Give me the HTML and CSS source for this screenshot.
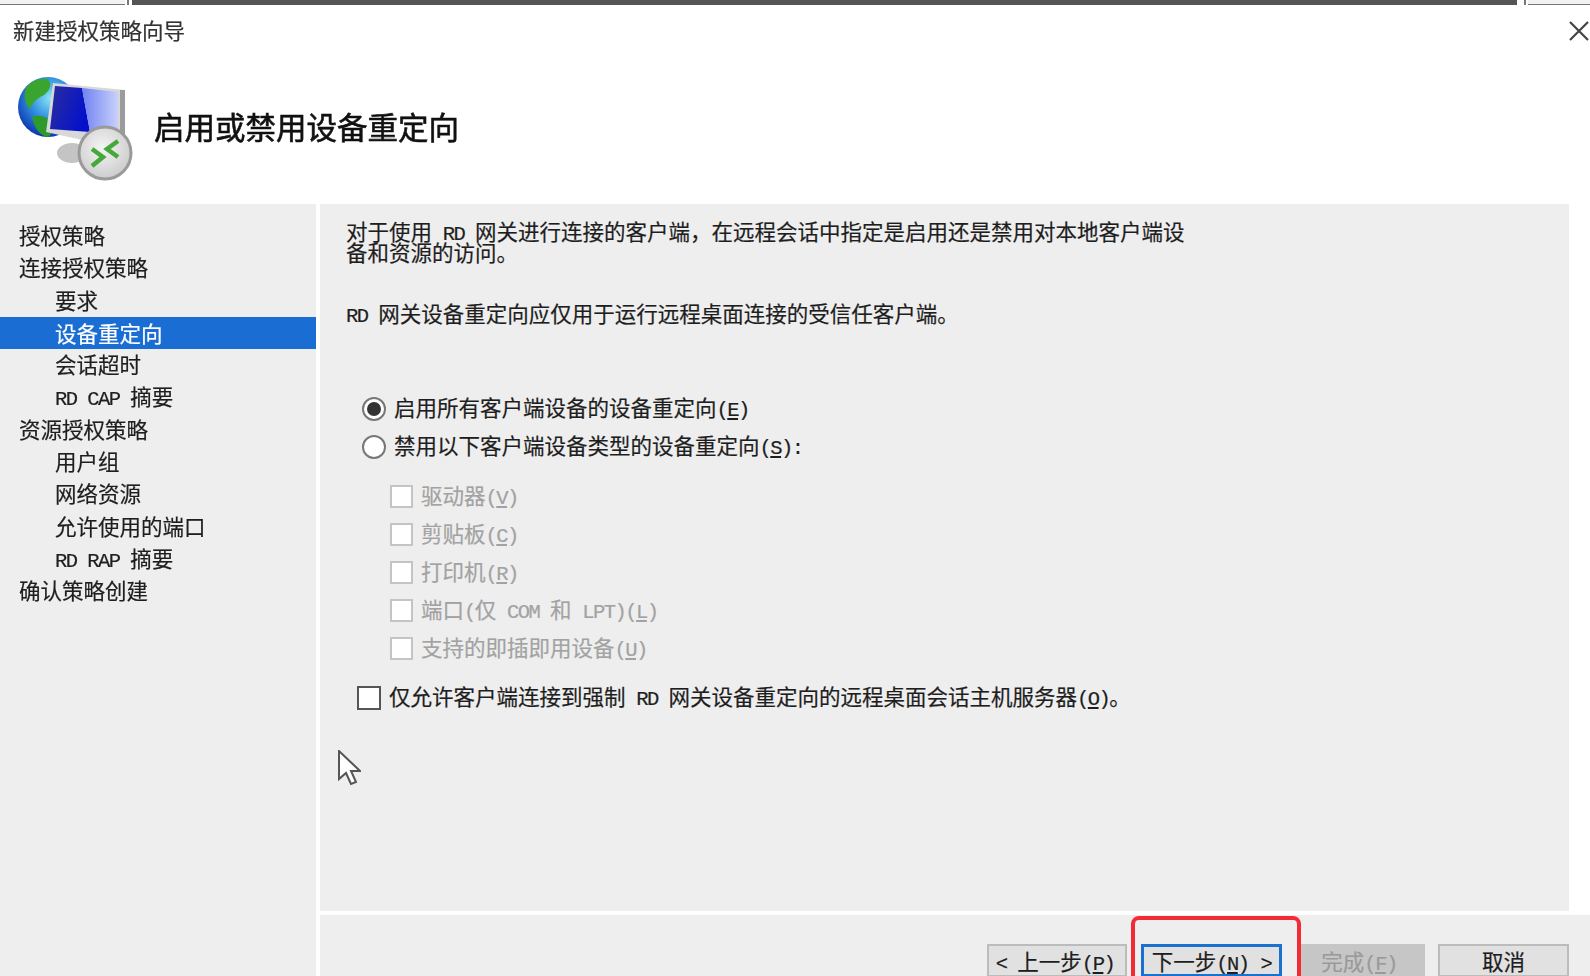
FILE: index.html
```html
<!DOCTYPE html>
<html lang="zh-CN">
<head>
    <meta charset="UTF-8">
    <title>新建授权策略向导</title>
    <link rel="stylesheet" href="styles.css">
</head>
<body>
    <div class="window">
        <div class="top-strip">
            <div class="strip-left"></div>
            <div class="strip-grip"></div>
            <div class="strip-dark"></div>
            <div class="strip-grip wide"></div>
            <div class="strip-right"></div>
        </div>

        <div class="title-bar">
            <span class="title-text">新建授权策略向导</span>
            <svg class="close-icon" viewBox="0 0 20 20" width="20" height="20">
                <path d="M1 1 L19 19 M19 1 L1 19" stroke="#444" stroke-width="2.2" fill="none"/>
            </svg>
        </div>

        <div class="banner">
            <svg class="banner-icon" viewBox="0 0 120 108" width="120" height="108">
                <defs>
                    <radialGradient id="sea" cx="0.55" cy="0.35" r="0.7">
                        <stop offset="0" stop-color="#8fe6f5"/>
                        <stop offset="0.5" stop-color="#2f8fe0"/>
                        <stop offset="1" stop-color="#0a2aa8"/>
                    </radialGradient>
                    <linearGradient id="screen-dark" x1="0" y1="0" x2="1" y2="0.4">
                        <stop offset="0" stop-color="#2a2f9c"/>
                        <stop offset="1" stop-color="#0510cc"/>
                    </linearGradient>
                    <linearGradient id="screen-light" x1="0" y1="0" x2="1" y2="0">
                        <stop offset="0" stop-color="#6f82f2"/>
                        <stop offset="1" stop-color="#c8d0fb"/>
                    </linearGradient>
                    <radialGradient id="badge" cx="0.45" cy="0.4" r="0.7">
                        <stop offset="0" stop-color="#f4f4f4"/>
                        <stop offset="1" stop-color="#c6c6c6"/>
                    </radialGradient>
                </defs>
                <circle cx="30" cy="34" r="30" fill="url(#sea)"/>
                <path d="M8 14 Q18 4 30 6 Q36 14 26 22 Q16 26 12 36 Q4 28 8 14 Z" fill="#3aa52e"/>
                <path d="M14 44 Q26 40 34 50 Q36 60 30 64 Q18 62 14 44 Z" fill="#2d9a2a"/>
                <ellipse cx="54" cy="80" rx="15" ry="10" fill="#c4c4c4"/>
                <path d="M35 10 L107 17 L107 62 L96 74 L28 59 Z" fill="#d8d8d8"/>
                <path d="M102 17 L107 17 L107 64 L102 68 Z" fill="#9b9b9b"/>
                <path d="M37 13 L64 15 L72 59 L32 56 Z" fill="url(#screen-dark)"/>
                <path d="M64 15 L100 19 L100 60 L72 59 Z" fill="url(#screen-light)"/>
                <circle cx="87" cy="80" r="26" fill="url(#badge)" stroke="#9a9a9a" stroke-width="3"/>
                <path d="M74 76 L85 84 L74 93 M100 68 L89 76 L100 84" fill="none" stroke="#45a83a" stroke-width="4.5"/>
            </svg>
            <span class="banner-title">启用或禁用设备重定向</span>
        </div>

        <div class="main">
            <div class="sidebar">
                <div class="nav-row">授权策略</div>
                <div class="nav-row">连接授权策略</div>
                <div class="nav-row sub">要求</div>
                <div class="nav-row sub selected">设备重定向</div>
                <div class="nav-row sub">会话超时</div>
                <div class="nav-row sub"><span class="lat">RD CAP </span>摘要</div>
                <div class="nav-row">资源授权策略</div>
                <div class="nav-row sub">用户组</div>
                <div class="nav-row sub">网络资源</div>
                <div class="nav-row sub">允许使用的端口</div>
                <div class="nav-row sub"><span class="lat">RD RAP </span>摘要</div>
                <div class="nav-row">确认策略创建</div>
            </div>

            <div class="right-col">
                <div class="content">
                    <p class="intro">对于使用<span class="lat"> RD </span>网关进行连接的客户端，在远程会话中指定是启用还是禁用对本地客户端设<br>备和资源的访问。</p>
                    <p class="note"><span class="lat">RD </span>网关设备重定向应仅用于运行远程桌面连接的受信任客户端。</p>

                    <div class="radio-row">
                        <span class="radio checked"></span>
                        <span class="radio-label">启用所有客户端设备的设备重定向<span class="lat">(<u>E</u>)</span></span>
                    </div>
                    <div class="radio-row">
                        <span class="radio"></span>
                        <span class="radio-label">禁用以下客户端设备类型的设备重定向<span class="lat">(<u>S</u>):</span></span>
                    </div>

                    <div class="device-list">
                        <div class="check-row"><span class="check"></span><span>驱动器<span class="lat">(<u>V</u>)</span></span></div>
                        <div class="check-row"><span class="check"></span><span>剪贴板<span class="lat">(<u>C</u>)</span></span></div>
                        <div class="check-row"><span class="check"></span><span>打印机<span class="lat">(<u>R</u>)</span></span></div>
                        <div class="check-row"><span class="check"></span><span>端口<span class="lat">(</span>仅<span class="lat"> COM </span>和<span class="lat"> LPT)(<u>L</u>)</span></span></div>
                        <div class="check-row"><span class="check"></span><span>支持的即插即用设备<span class="lat">(<u>U</u>)</span></span></div>
                    </div>

                    <div class="only-row">
                        <span class="check strong"></span>
                        <span>仅允许客户端连接到强制<span class="lat"> RD </span>网关设备重定向的远程桌面会话主机服务器<span class="lat">(<u>O</u>)</span>。</span>
                    </div>

                    <svg class="cursor" viewBox="0 0 24 36" width="24" height="36">
                        <path d="M2 1 L2 29 L9 23 L14 34 L19 32 L14 21 L23 21 Z" fill="#fff" stroke="#555" stroke-width="2"/>
                    </svg>
                </div>

                <div class="footer">
                    <button class="btn back"><span class="lat">&lt; </span>上一步<span class="lat">(<u>P</u>)</span></button>
                    <button class="btn next">下一步<span class="lat">(<u>N</u>)</span><span class="lat arrow">&gt;</span></button>
                    <button class="btn finish" disabled>完成<span class="lat">(<u>F</u>)</span></button>
                    <button class="btn cancel">取消</button>
                    <div class="red-box"></div>
                </div>
            </div>
        </div>
    </div>
</body>
</html>
```

FILE: styles.css
```css
:root {
    --panel: #eeeeee;
    --ink: #1e1e1e;
    --muted: #a2a2a2;
    --select: #1a6dd2;
}

html, body {
    margin: 0;
    height: 100%;
    overflow: hidden;
    background: #fff;
}

.window {
    width: 1590px;
    height: 976px;
    display: flex;
    flex-direction: column;
    overflow: hidden;
    color: var(--ink);
    font-family: "Noto Sans CJK SC", "Liberation Sans", sans-serif;
    font-size: 21.5px;
    line-height: 21px;
    -webkit-text-stroke: 0.2px currentColor;
    filter: blur(0.55px);
}

.lat {
    font-family: "Liberation Mono", monospace;
    font-size: 20.5px;
    letter-spacing: -1.55px;
    line-height: 0;
    white-space: pre;
}

.top-strip {
    height: 5px;
    display: flex;
    flex: none;
}

.strip-left, .strip-right {
    background: #f2f2f2;
    border-bottom: 1px solid #777;
}

.strip-left { width: 125px; }
.strip-right { flex: 1; }

.strip-grip {
    width: 7px;
    background: linear-gradient(90deg, #fff 30%, #777 30%, #777 60%, #fff 60%);
}

.strip-grip.wide {
    width: 11px;
    background: linear-gradient(90deg, #fff 60%, #777 60%, #777 80%, #fff 80%);
}

.strip-dark {
    width: 1385px;
    background: #555;
}

.title-bar {
    height: 52px;
    flex: none;
    display: flex;
    align-items: center;
    justify-content: space-between;
    padding-left: 13px;
}

.title-text {
    color: #333;
    line-height: 48px;
    margin-bottom: 2px;
}

.close-icon {
    margin-right: 1px;
}

.banner {
    height: 147px;
    flex: none;
    display: flex;
    align-items: center;
    padding-left: 18px;
    box-sizing: border-box;
}

.banner-icon {
    flex: none;
    margin-bottom: 7px;
}

.banner-title {
    margin-left: 16px;
    margin-bottom: 9px;
    font-size: 30.5px;
    line-height: 36px;
    color: #111;
    -webkit-text-stroke: 0.6px #111;
}

.main {
    flex: 1;
    display: flex;
    gap: 4px;
    min-height: 0;
}

.sidebar {
    width: 316px;
    flex: none;
    background: var(--panel);
    padding-top: 15px;
}

.nav-row {
    height: 32.3px;
    line-height: 32.3px;
    padding-left: 19px;
}

.nav-row.sub {
    padding-left: 55px;
}

.nav-row.selected {
    background: var(--select);
    color: #fff;
    margin-top: 1px;
    margin-bottom: -1px;
}

.right-col {
    flex: 1;
    display: flex;
    flex-direction: column;
    gap: 4px;
    min-width: 0;
}

.content {
    position: relative;
    height: 707px;
    margin-right: 21px;
    flex: none;
    background: var(--panel);
    padding: 16px 0 0 26px;
    box-sizing: border-box;
}

.intro, .note {
    margin: 0;
    white-space: nowrap;
}

.note {
    margin-top: 40px;
}

.radio-row {
    display: flex;
    align-items: center;
    gap: 8px;
    height: 24px;
    margin-left: 16px;
    margin-bottom: 14px;
}

.note + .radio-row {
    margin-top: 73px;
}

.radio {
    width: 20px;
    height: 20px;
    flex: none;
    margin-top: 2px;
    border: 2px solid #777;
    border-radius: 50%;
    background: #fff;
    position: relative;
}

.radio-label {
    padding-bottom: 4px;
}

.radio.checked::after {
    content: '';
    position: absolute;
    inset: 3px;
    background: #333;
    border-radius: 50%;
}

.device-list {
    margin-top: 24px;
    margin-left: 44px;
    display: flex;
    flex-direction: column;
    gap: 14px;
}

.check-row {
    display: flex;
    align-items: center;
    gap: 8px;
    height: 24px;
    color: var(--muted);
}

.check {
    width: 19px;
    height: 19px;
    flex: none;
    margin-top: 4px;
    background: #fff;
    border: 2px solid #c4c4c4;
}

.check.strong {
    width: 20px;
    height: 20px;
    margin-top: 6px;
    border-color: #555;
}

.only-row {
    display: flex;
    align-items: center;
    gap: 8px;
    height: 24px;
    margin-top: 25px;
    margin-left: 11px;
}

.cursor {
    position: absolute;
    left: 17px;
    top: 546px;
}

.footer {
    flex: 1;
    position: relative;
    display: flex;
    background: var(--panel);
    padding: 29px 21px 0 667px;
}

.btn {
    height: 33px;
    box-sizing: border-box;
    padding: 0;
    margin: 0;
    font: inherit;
    line-height: 28px;
    color: var(--ink);
    background: #e1e1e1;
    border: 2px solid #bcbcbc;
    white-space: nowrap;
}

.btn.back {
    width: 140px;
    padding-right: 4px;
}

.btn.next {
    width: 141px;
    margin-left: 14px;
    border: 3px solid #1a72d0;
}

.btn.next .arrow {
    margin-left: 12px;
}

.btn.finish {
    width: 124px;
    margin-left: 19px;
    padding-right: 8px;
    background: #c6c6c6;
    border-color: #c6c6c6;
    color: #9a9a9a;
}

.btn.cancel {
    width: 131px;
    margin-left: 13px;
}

.red-box {
    position: absolute;
    left: 811px;
    top: 1px;
    width: 162px;
    height: 90px;
    border: 4px solid #f12b38;
    border-radius: 8px;
}
```
